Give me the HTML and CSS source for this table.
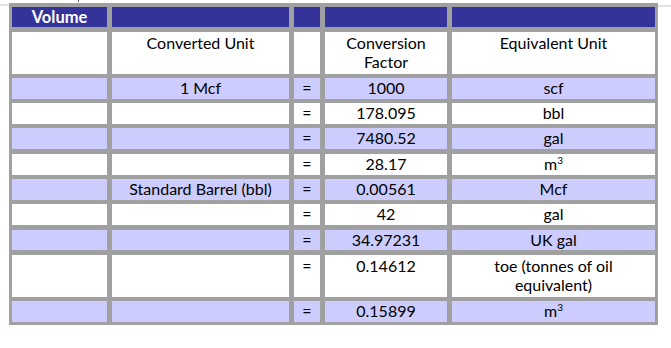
FILE: index.html
```html
<!DOCTYPE html>
<html lang="en">
<head>
<meta charset="utf-8">
<title>Volume conversions</title>
<link rel="stylesheet" href="styles.css">
</head>
<body>
<div class="top-strip"><span class="tick"></span></div>
<div class="frame">
  <div class="rule rule-left"></div>
  <div class="sheet">
    <div class="cell head">Volume</div>
    <div class="cell head"></div>
    <div class="cell head"></div>
    <div class="cell head"></div>
    <div class="cell head"></div>

    <div class="cell top"></div>
    <div class="cell top">Converted Unit</div>
    <div class="cell top"></div>
    <div class="cell top">Conversion<br>Factor</div>
    <div class="cell top">Equivalent Unit</div>

    <div class="cell alt"></div>
    <div class="cell alt">1 Mcf</div>
    <div class="cell alt">=</div>
    <div class="cell alt">1000</div>
    <div class="cell alt">scf</div>

    <div class="cell"></div>
    <div class="cell"></div>
    <div class="cell">=</div>
    <div class="cell">178.095</div>
    <div class="cell">bbl</div>

    <div class="cell alt"></div>
    <div class="cell alt"></div>
    <div class="cell alt">=</div>
    <div class="cell alt">7480.52</div>
    <div class="cell alt">gal</div>

    <div class="cell"></div>
    <div class="cell"></div>
    <div class="cell">=</div>
    <div class="cell">28.17</div>
    <div class="cell">m<span class="sup">3</span></div>

    <div class="cell alt"></div>
    <div class="cell alt">Standard Barrel (bbl)</div>
    <div class="cell alt">=</div>
    <div class="cell alt">0.00561</div>
    <div class="cell alt">Mcf</div>

    <div class="cell"></div>
    <div class="cell"></div>
    <div class="cell">=</div>
    <div class="cell">42</div>
    <div class="cell">gal</div>

    <div class="cell alt"></div>
    <div class="cell alt"></div>
    <div class="cell alt">=</div>
    <div class="cell alt">34.97231</div>
    <div class="cell alt">UK gal</div>

    <div class="cell top"></div>
    <div class="cell top"></div>
    <div class="cell top">=</div>
    <div class="cell top">0.14612</div>
    <div class="cell top">toe (tonnes of oil<br>equivalent)</div>

    <div class="cell alt"></div>
    <div class="cell alt"></div>
    <div class="cell alt">=</div>
    <div class="cell alt">0.15899</div>
    <div class="cell alt">m<span class="sup">3</span></div>
  </div>
  <div class="rule rule-right"></div>
</div>
</body>
</html>
```
FILE: styles.css
```css
html, body {
  margin: 0;
  padding: 0;
  background: #ffffff;
}

body {
  font-family: Lato, "Open Sans", "Liberation Sans", sans-serif;
  font-size: 16px;
  color: #000000;
}

.top-strip {
  height: 3px;
  padding-left: 78px;
}

.tick {
  display: block;
  width: 1px;
  height: 2px;
  background: #555555;
}

.frame {
  display: flex;
  align-items: flex-start;
}

.rule {
  height: 2px;
  background: #e2e2e2;
}

.rule-left {
  width: 9px;
  margin-top: 1px;
}

.rule-right {
  flex: 1;
  margin-top: 2px;
}

.sheet {
  display: grid;
  grid-template-columns: 95px 177px 26px 122px 203px;
  grid-template-rows: 20px 42px 20.5px 20.5px 21px 21px 20.5px 21px 20.5px 42px 20.5px;
  column-gap: 5px;
  row-gap: 4.5px;
  padding: 4px 3px 3px 3px;
  background: #a0a0a0;
}

.cell {
  background: #ffffff;
  text-align: center;
  line-height: 19px;
  white-space: nowrap;
}

.cell.alt {
  background: #ccccff;
}

.cell.head {
  background: #333399;
  color: #ffffff;
  font-weight: bold;
  font-size: 16.5px;
  line-height: 20px;
}

.cell.top {
  padding-top: 1px;
  line-height: 19px;
}

.sup {
  font-size: 10px;
  vertical-align: 6px;
  line-height: 0;
}
```
